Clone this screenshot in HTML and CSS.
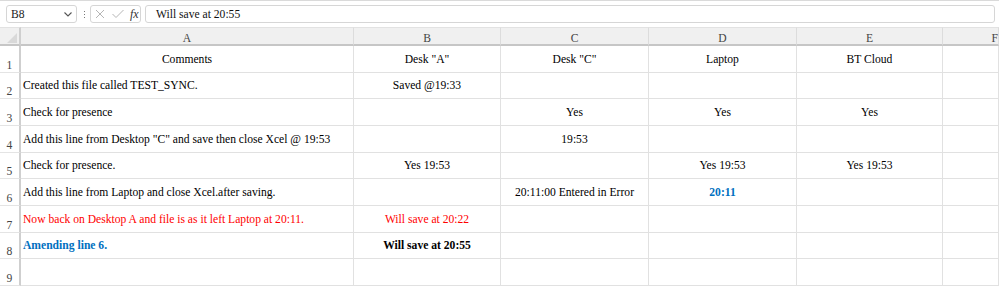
FILE: index.html
```html
<!DOCTYPE html>
<html lang="en">
  <head>
    <meta charset="UTF-8" />
    <meta name="viewport" content="width=device-width, initial-scale=1.0" />
    <title>TEST_SYNC</title>
    <link rel="stylesheet" href="styles.css">
  </head>
  <body>
    <!-- Formula bar -->
    <div class="formula-bar">
      <div class="name-box">
        <span>B8</span>
        <svg class="chevron" width="8" height="5" viewBox="0 0 8 5">
          <polyline points="0.5,0.5 4,4 7.5,0.5" fill="none" stroke="#555" stroke-width="1.1" />
        </svg>
      </div>
      <div class="grip">
        <span></span><span></span><span></span>
      </div>
      <div class="fx-box">
        <svg width="10" height="10" viewBox="0 0 10 10">
          <path d="M1 1 L9 9 M9 1 L1 9" stroke="#b5b5b5" stroke-width="1" />
        </svg>
        <svg width="12" height="10" viewBox="0 0 12 10">
          <polyline points="0.5,5 4,8.5 11.5,1" fill="none" stroke="#b5b5b5" stroke-width="1" />
        </svg>
        <span class="fx">fx</span>
      </div>
      <div class="formula-input">Will save at 20:55</div>
    </div>

    <!-- Sheet grid -->
    <div class="sheet">
      <div class="corner"><span class="select-all"></span></div>
      <div class="col-head">A</div>
      <div class="col-head">B</div>
      <div class="col-head">C</div>
      <div class="col-head">D</div>
      <div class="col-head">E</div>
      <div class="col-head col-f">F</div>

      <div class="row-head">1</div>
      <div class="cell center">Comments</div>
      <div class="cell center">Desk "A"</div>
      <div class="cell center">Desk "C"</div>
      <div class="cell center">Laptop</div>
      <div class="cell center">BT Cloud</div>
      <div class="cell"></div>

      <div class="row-head">2</div>
      <div class="cell">Created this file called TEST_SYNC.</div>
      <div class="cell center">Saved @19:33</div>
      <div class="cell"></div>
      <div class="cell"></div>
      <div class="cell"></div>
      <div class="cell"></div>

      <div class="row-head">3</div>
      <div class="cell">Check for presence</div>
      <div class="cell"></div>
      <div class="cell center">Yes</div>
      <div class="cell center">Yes</div>
      <div class="cell center">Yes</div>
      <div class="cell"></div>

      <div class="row-head">4</div>
      <div class="cell">Add this line from Desktop "C" and save then close Xcel @ 19:53</div>
      <div class="cell"></div>
      <div class="cell center">19:53</div>
      <div class="cell"></div>
      <div class="cell"></div>
      <div class="cell"></div>

      <div class="row-head">5</div>
      <div class="cell">Check for presence.</div>
      <div class="cell center">Yes 19:53</div>
      <div class="cell"></div>
      <div class="cell center">Yes 19:53</div>
      <div class="cell center">Yes 19:53</div>
      <div class="cell"></div>

      <div class="row-head">6</div>
      <div class="cell">Add this line from Laptop and close Xcel.after saving.</div>
      <div class="cell"></div>
      <div class="cell center">20:11:00 Entered in Error</div>
      <div class="cell center blue">20:11</div>
      <div class="cell"></div>
      <div class="cell"></div>

      <div class="row-head">7</div>
      <div class="cell red">Now back on Desktop A and file is as it left Laptop at 20:11.</div>
      <div class="cell center red">Will save at 20:22</div>
      <div class="cell"></div>
      <div class="cell"></div>
      <div class="cell"></div>
      <div class="cell"></div>

      <div class="row-head">8</div>
      <div class="cell blue">Amending line 6.</div>
      <div class="cell center bold">Will save at 20:55</div>
      <div class="cell"></div>
      <div class="cell"></div>
      <div class="cell"></div>
      <div class="cell"></div>

      <div class="row-head">9</div>
      <div class="cell"></div>
      <div class="cell"></div>
      <div class="cell"></div>
      <div class="cell"></div>
      <div class="cell"></div>
      <div class="cell"></div>
    </div>
  </body>
</html>
```

FILE: styles.css
```css
/* Base */
* {
  box-sizing: border-box;
  margin: 0;
  padding: 0;
}
html,
body {
  width: 999px;
  height: 288px;
  overflow: hidden;
}
body {
  font-family: "Liberation Serif", "Times New Roman", serif;
  font-size: 11.6px;
  color: #000;
  background: #fff;
}

/* Formula bar */
.formula-bar {
  display: flex;
  align-items: center;
  height: 27px;
  padding: 0 4px 0 6px;
  border-top: 1px solid #dadada;
}
.name-box {
  display: flex;
  align-items: center;
  justify-content: space-between;
  width: 71px;
  height: 18px;
  padding: 0 4px 0 4px;
  border: 1px solid #d6d6d6;
  border-radius: 3px;
  font-size: 11.6px;
  color: #222;
}
.chevron {
  margin-top: 1px;
}
.grip {
  display: flex;
  flex-direction: column;
  gap: 2px;
  margin: 0 5px 0 7px;
}
.grip span {
  width: 1px;
  height: 1px;
  background: #777;
}
.fx-box {
  display: flex;
  align-items: center;
  gap: 7px;
  width: 51px;
  height: 18px;
  padding-left: 4px;
  border: 1px solid #d6d6d6;
  border-radius: 3px;
}
.fx {
  font-style: italic;
  font-size: 12px;
  color: #333;
  margin-left: -1px;
}
.formula-input {
  flex: 1;
  height: 18px;
  margin-left: 4px;
  padding: 2px 10px;
  border: 1px solid #d6d6d6;
  border-radius: 3px;
  font-size: 11.6px;
  color: #111;
  line-height: 13px;
}

/* Sheet */
.sheet {
  display: grid;
  grid-template-columns: 21px 333px 147px 148px 148px 146px 56px;
  grid-template-rows: 19px repeat(9, 26.67px);
}
.corner {
  position: relative;
  background: #f0f0f0;
  border-top: 1px solid #e2e2e2;
  border-bottom: 2px solid #c6c6c6;
  border-right: 2px solid #cfcfcf;
}
.select-all {
  position: absolute;
  right: 2px;
  bottom: 1px;
  width: 0;
  height: 0;
  border-left: 10px solid transparent;
  border-bottom: 10px solid #d9d9d9;
}
.col-head {
  display: flex;
  align-items: flex-end;
  justify-content: center;
  line-height: 10px;
  background: #f0f0f0;
  border-top: 1px solid #e2e2e2;
  border-bottom: 2px solid #c6c6c6;
  border-right: 1px solid #dcdcdc;
  color: #444;
  font-size: 11.6px;
}
.col-f {
  justify-content: flex-end;
}
.row-head {
  display: flex;
  align-items: flex-end;
  justify-content: center;
  line-height: 12px;
  border-right: 2px solid #cfcfcf;
  border-bottom: 1px solid #e4e4e4;
  color: #444;
  font-size: 11.6px;
}
.cell {
  display: flex;
  align-items: flex-end;
  padding: 0 2px 6px 2px;
  border-right: 1px solid #e1e1e1;
  border-bottom: 1px solid #e1e1e1;
  white-space: nowrap;
}
.center {
  justify-content: center;
}
.red {
  color: #ff0000;
}
.blue {
  color: #0070c0;
  font-weight: bold;
}
.bold {
  font-weight: bold;
}
```
